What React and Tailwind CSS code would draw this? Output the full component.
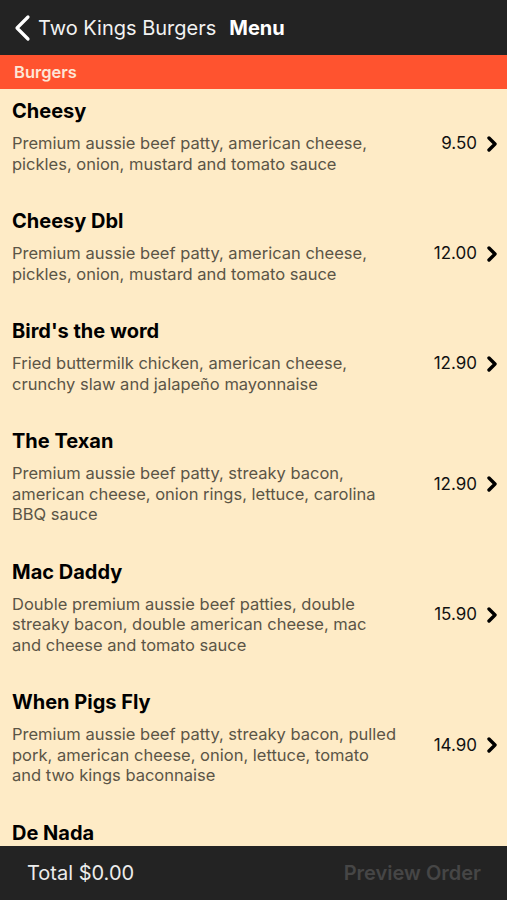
const items = [
  { name: 'Cheesy', lines: ['Premium aussie beef patty, american cheese,', 'pickles, onion, mustard and tomato sauce'], price: '9.50' },
  { name: 'Cheesy Dbl', lines: ['Premium aussie beef patty, american cheese,', 'pickles, onion, mustard and tomato sauce'], price: '12.00' },
  { name: "Bird's the word", lines: ['Fried buttermilk chicken, american cheese,', 'crunchy slaw and jalapeño mayonnaise'], price: '12.90' },
  { name: 'The Texan', lines: ['Premium aussie beef patty, streaky bacon,', 'american cheese, onion rings, lettuce, carolina', 'BBQ sauce'], price: '12.90' },
  { name: 'Mac Daddy', lines: ['Double premium aussie beef patties, double', 'streaky bacon, double american cheese, mac', 'and cheese and tomato sauce'], price: '15.90' },
  { name: 'When Pigs Fly', lines: ['Premium aussie beef patty, streaky bacon, pulled', 'pork, american cheese, onion, lettuce, tomato', 'and two kings baconnaise'], price: '14.90' },
  { name: 'De Nada', lines: ['Premium aussie beef patty, american cheese,', 'pickles, onion, mustard and tomato sauce'], price: '13.90' },
]

const Chevron = () => (
  <svg width="12" height="16" viewBox="0 0 12 16" className="text-black">
    <path d="M3 2 L9 8 L3 14" fill="none" stroke="currentColor" strokeWidth="3.4" strokeLinecap="round" strokeLinejoin="round" />
  </svg>
)

const BackChevron = () => (
  <svg width="22" height="28" viewBox="0 0 22 28" className="text-white">
    <path d="M16 3 L5 14 L16 25" fill="none" stroke="currentColor" strokeWidth="3.2" strokeLinecap="round" strokeLinejoin="round" />
  </svg>
)

const MenuRow = ({ item }) => (
  <div className="flex">
    <div className="flex-1 pl-3 pt-[10px] pb-[25px]">
      <div className="text-[20px] leading-[24px] font-bold text-black">{item.name}</div>
      <div className="mt-[10px] text-[16.5px] leading-[20.5px] text-[#5b5546]">
        {item.lines.map((l, i) => (
          <div key={i}>{l}</div>
        ))}
      </div>
    </div>
    <div className="self-center flex items-center gap-[9px] pr-[9px]">
      <span className="text-[17px] text-[#111]">{item.price}</span>
      <Chevron />
    </div>
  </div>
)

export default function App() {
  return (
    <div className="w-[507px] h-[900px] flex flex-col bg-[#feebc6] overflow-hidden" style={{ fontFamily: 'Inter, "Noto Sans", sans-serif' }}>
      <div className="h-[55px] shrink-0 bg-[#232323] flex items-center pl-[12px]">
        <BackChevron />
        <span className="ml-[4px] text-[20px] text-[#f2f2f2]">Two Kings Burgers</span>
        <span className="ml-[13px] text-[20px] font-bold text-white">Menu</span>
      </div>
      <div className="h-[34px] shrink-0 bg-[#ff532f] flex items-center px-[14px]">
        <span className="text-[16.5px] font-semibold text-[#fde6d6]">Burgers</span>
      </div>
      <div className="flex-1 overflow-hidden">
        {items.map((item) => (
          <MenuRow key={item.name} item={item} />
        ))}
      </div>
      <div className="h-[54px] shrink-0 bg-[#232323] flex items-center justify-between pl-[27px] pr-[26px]">
        <span className="text-[20px] text-[#ececec]">Total $0.00</span>
        <span className="text-[20px] font-semibold text-[#464646]">Preview Order</span>
      </div>
    </div>
  )
}
